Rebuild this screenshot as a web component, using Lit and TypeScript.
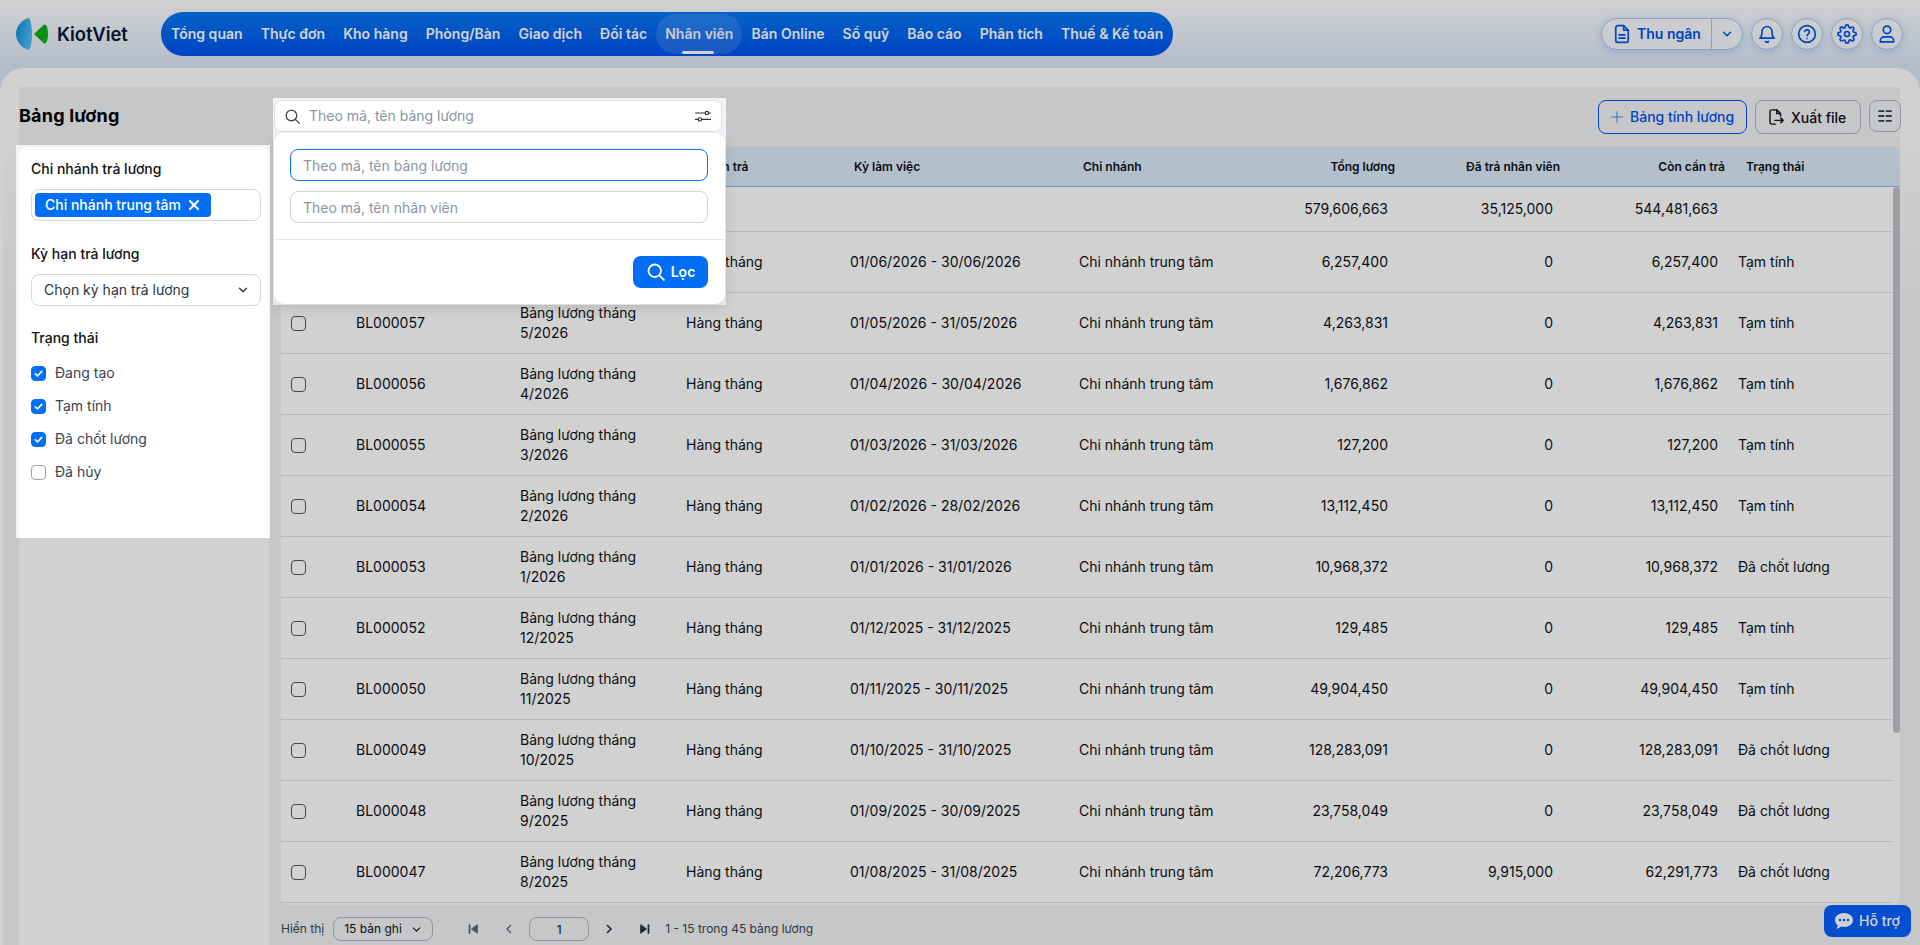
import { css, html, LitElement, svg, TemplateResult } from "lit";
import { customElement } from "lit/decorators.js";

const NAV = [
  "Tổng quan",
  "Thực đơn",
  "Kho hàng",
  "Phòng/Bàn",
  "Giao dịch",
  "Đối tác",
  "Nhân viên",
  "Bán Online",
  "Sổ quỹ",
  "Báo cáo",
  "Phân tích",
  "Thuế & Kế toán",
];

const ROWS = [
  ["BL000058", "6/2026", "01/06/2026 - 30/06/2026", "6,257,400", "0", "6,257,400", "Tạm tính"],
  ["BL000057", "5/2026", "01/05/2026 - 31/05/2026", "4,263,831", "0", "4,263,831", "Tạm tính"],
  ["BL000056", "4/2026", "01/04/2026 - 30/04/2026", "1,676,862", "0", "1,676,862", "Tạm tính"],
  ["BL000055", "3/2026", "01/03/2026 - 31/03/2026", "127,200", "0", "127,200", "Tạm tính"],
  ["BL000054", "2/2026", "01/02/2026 - 28/02/2026", "13,112,450", "0", "13,112,450", "Tạm tính"],
  ["BL000053", "1/2026", "01/01/2026 - 31/01/2026", "10,968,372", "0", "10,968,372", "Đã chốt lương"],
  ["BL000052", "12/2025", "01/12/2025 - 31/12/2025", "129,485", "0", "129,485", "Tạm tính"],
  ["BL000050", "11/2025", "01/11/2025 - 30/11/2025", "49,904,450", "0", "49,904,450", "Tạm tính"],
  ["BL000049", "10/2025", "01/10/2025 - 31/10/2025", "128,283,091", "0", "128,283,091", "Đã chốt lương"],
  ["BL000048", "9/2025", "01/09/2025 - 30/09/2025", "23,758,049", "0", "23,758,049", "Đã chốt lương"],
  ["BL000047", "8/2025", "01/08/2025 - 31/08/2025", "72,206,773", "9,915,000", "62,291,773", "Đã chốt lương"],
];

const STATUSES: [string, boolean][] = [
  ["Đang tạo", true],
  ["Tạm tính", true],
  ["Đã chốt lương", true],
  ["Đã hủy", false],
];

const icon = (size: number, body: unknown, width = 2): TemplateResult => html`<svg
  width=${size}
  height=${size}
  viewBox="0 0 24 24"
  fill="none"
  stroke="currentColor"
  stroke-width=${width}
  stroke-linecap="round"
  stroke-linejoin="round"
>
  ${body}
</svg>`;

const searchPath = svg`<circle cx="10.5" cy="10.5" r="7.5"></circle><path d="M16 16l5.5 5.5"></path>`;
const chevronDown = svg`<path d="M6 9l6 6 6-6"></path>`;
const bell = svg`<path d="M6 9a6 6 0 1 1 12 0c0 6 2.5 8 2.5 8h-17S6 15 6 9z"></path><path d="M10.3 21a2 2 0 0 0 3.4 0"></path>`;
const help = svg`<circle cx="12" cy="12" r="10"></circle><path d="M9.1 9a3 3 0 0 1 5.8 1c0 2-2.9 2.4-2.9 4.2"></path><path d="M12 17.6v.1"></path>`;
const gear = svg`<circle cx="12" cy="12" r="3"></circle><path d="M19.4 15a1.65 1.65 0 0 0 .33 1.82l.06.06a2 2 0 1 1-2.83 2.83l-.06-.06a1.65 1.65 0 0 0-1.82-.33 1.65 1.65 0 0 0-1 1.51V21a2 2 0 1 1-4 0v-.09A1.65 1.65 0 0 0 9 19.4a1.65 1.65 0 0 0-1.82.33l-.06.06a2 2 0 1 1-2.83-2.83l.06-.06a1.65 1.65 0 0 0 .33-1.82 1.65 1.65 0 0 0-1.51-1H3a2 2 0 1 1 0-4h.09A1.65 1.65 0 0 0 4.6 9a1.65 1.65 0 0 0-.33-1.82l-.06-.06a2 2 0 1 1 2.83-2.83l.06.06a1.65 1.65 0 0 0 1.82.33H9a1.65 1.65 0 0 0 1-1.51V3a2 2 0 1 1 4 0v.09a1.65 1.65 0 0 0 1 1.51 1.65 1.65 0 0 0 1.82-.33l.06-.06a2 2 0 1 1 2.83 2.83l-.06.06a1.65 1.65 0 0 0-.33 1.82V9a1.65 1.65 0 0 0 1.51 1H21a2 2 0 1 1 0 4h-.09a1.65 1.65 0 0 0-1.51 1z"></path>`;
const user = svg`<circle cx="12" cy="7" r="4.5"></circle><path d="M4 21.5v-1.5a4.5 4.5 0 0 1 4.500-4.500h7a4.500 4.500 0 0 1 4.500 4.500v1.500z"></path>`;
const fileDoc = svg`<path d="M14 2H7a2.500 2.500 0 0 0-2.500 2.500v15A2.500 2.500 0 0 0 7 22h10a2.500 2.500 0 0 0 2.500-2.500V7.500z"></path><path d="M14 2v5.500h5.500"></path><path d="M8.500 13h7M8.500 17h7"></path>`;
const exportDoc = svg`<path d="M11 21.500H6.500A2.500 2.500 0 0 1 4 19V5a2.500 2.500 0 0 1 2.500-2.500H13l5 5v3"></path><path d="M13 2.500v5h5"></path><path d="M10.500 16.500h11M18.500 13.500l3 3-3 3"></path>`;
const sliders = svg`<path d="M2 8h13M19.500 8H22M2 16.500h3.500M10 16.500h12"></path><circle cx="17.200" cy="8" r="2.200"></circle><circle cx="7.700" cy="16.500" r="2.200"></circle>`;
const columns = svg`<path stroke-linecap="butt" d="M3 5.500h8M13 5.500h8M3 12h8M13 12h8M3 18.500h8M13 18.500h8"></path>`;
const check = svg`<path d="M6 12.500l4 4 8-8.500"></path>`;

@customElement("app-root")
export class AppRoot extends LitElement {
  static styles = css`
    :host {
      display: block;
      width: 1920px;
      height: 945px;
      overflow: hidden;
      position: relative;
      font-family: Inter, "Noto Sans", sans-serif;
      font-size: 14px;
      line-height: 20px;
      color: #0d1117;
      background: linear-gradient(180deg, #fff 0, #dbe7f8 68px, #dbe7f8 100%);
    }
    * {
      box-sizing: border-box;
    }
    svg {
      display: block;
      flex: none;
    }

    /* top bar */
    .top {
      height: 68px;
      display: flex;
      align-items: center;
      padding: 0 17px 0 16px;
    }
    .logo {
      display: flex;
      align-items: center;
      gap: 9px;
      width: 145px;
      font-size: 18.5px;
      font-weight: 600;
      letter-spacing: -0.1px;
      color: #0b1736;
    }
    .nav {
      display: flex;
      align-items: center;
      height: 44px;
      padding: 0 1px;
      border-radius: 22px;
      background: linear-gradient(180deg, #0478f4 0, #0052ef 100%);
    }
    .nav-item {
      position: relative;
      height: 40px;
      display: flex;
      align-items: center;
      padding: 0 9px;
      border-radius: 20px;
      color: #fff;
      font-weight: 600;
      letter-spacing: 0.02px;
      white-space: nowrap;
    }
    .nav-item.active {
      background: rgba(255, 255, 255, 0.13);
      color: #f4f7fc;
    }
    .nav-item.active::after {
      content: "";
      position: absolute;
      left: 26px;
      bottom: 0;
      width: 32px;
      height: 3px;
      border-radius: 2px;
      background: #fff;
    }
    .right {
      margin-left: auto;
      display: flex;
      align-items: center;
      gap: 8px;
      color: #0052ef;
    }
    .pill,
    .round {
      height: 32px;
      border: 1px solid #a9c8f2;
      background: rgba(255, 255, 255, 0.55);
      box-shadow: 0 2px 8px rgba(40, 110, 220, 0.22);
    }
    .pill {
      width: 142px;
      display: flex;
      align-items: center;
      border-radius: 16px;
      font-weight: 600;
    }
    .pill-main {
      display: flex;
      align-items: center;
      gap: 5px;
      width: 110px;
      height: 100%;
      padding-left: 10px;
      border-right: 1px solid #a9c8f2;
    }
    .pill-caret {
      flex: 1;
      display: flex;
      justify-content: center;
    }
    .round {
      width: 32px;
      border-radius: 50%;
      display: flex;
      align-items: center;
      justify-content: center;
    }

    /* page card */
    .card {
      height: 877px;
      padding: 19px 20px 0 16px;
      border-left: 3px solid #fff;
      border-radius: 24px 24px 0 0;
      background: linear-gradient(180deg, #fff 0, #fff 60px, #f2f3f6 260px);
      overflow: hidden;
    }
    .inner {
      height: 858px;
      background: #f2f3f5;
    }
    .toolbar {
      height: 60px;
      padding-top: 13px;
      display: flex;
      align-items: flex-start;
    }
    .title {
      width: 255px;
      font-size: 18px;
      font-weight: 700;
      letter-spacing: 0.2px;
      line-height: 32px;
      color: #000;
    }

    /* highlighted search */
    .search-wrap {
      position: relative;
      z-index: 20;
      width: 448px;
      height: 32px;
    }
    .spot {
      position: absolute;
      top: -2px;
      left: -1px;
      width: 453px;
      height: 207px;
      background: #f2f3f6;
    }
    .search {
      position: relative;
      height: 32px;
      display: flex;
      align-items: center;
      padding: 0 9px 0 9px;
      border: 1px solid #e0e2e7;
      border-radius: 8px;
      background: #fff;
      color: #8a94a6;
    }
    .search .q {
      margin-left: 8px;
      flex: 1;
    }
    .search .mag {
      color: #3d4656;
    }
    .search .sl {
      color: #2b3442;
    }
    .popup {
      position: absolute;
      top: 33px;
      left: 0;
      width: 451px;
      height: 171px;
      padding: 16px 16px 0;
      border-radius: 10px;
      background: #fff;
      box-shadow: 0 4px 14px rgba(0, 0, 0, 0.12);
    }
    .popup input {
      display: block;
      width: 418px;
      height: 32px;
      margin-bottom: 10px;
      padding: 0 12px;
      border: 1px solid #cfd3da;
      border-radius: 8px;
      outline: none;
      font: inherit;
      background: #fff;
    }
    .popup input::placeholder {
      color: #8a94a6;
      opacity: 1;
    }
    .popup input.focus {
      border-color: #0a6ff5;
    }
    .popup hr {
      margin: 16px -16px 16px;
      border: 0;
      border-top: 1px solid #e8e9ed;
    }
    .apply {
      margin: 0 1px 0 auto;
      width: 75px;
      height: 32px;
      display: flex;
      align-items: center;
      justify-content: center;
      gap: 5px;
      border-radius: 8px;
      background: #006ff5;
      color: #fff;
      font-weight: 600;
    }

    .actions {
      margin: 0 -1px 0 auto;
      display: flex;
      gap: 8px;
    }
    .btn {
      height: 34px;
      display: flex;
      align-items: center;
      border: 1px solid #b4b8bf;
      border-radius: 8px;
      font-weight: 500;
    }
    .btn.primary {
      width: 149px;
      padding-left: 11px;
      gap: 6px;
      color: #0052ef;
      border-color: #0052ef;
    }
    .btn.primary .plus {
      color: #2f80f5;
    }
    .btn.export {
      width: 106px;
      padding-left: 11px;
      gap: 6px;
    }
    .btn.export span {
      padding-top: 2px;
    }
    .btn.cols {
      width: 32px;
      height: 32px;
      justify-content: center;
      color: #3d4656;
    }

    /* body */
    .content {
      display: flex;
      gap: 12px;
      height: 798px;
    }
    .aside {
      width: 250px;
      background: #fff;
      border-radius: 8px 8px 0 0;
    }
    .filter {
      position: relative;
      z-index: 20;
      width: 254px;
      height: 393px;
      margin: -2px 0 0 -3px;
      padding: 2px 1px 0 3px;
      background: #f2f3f6;
    }
    .filter-card {
      height: 100%;
      padding: 12px 8px 0 12px;
      border-radius: 8px 8px 0 0;
      background: #fff;
    }
    .label {
      font-weight: 500;
      color: #111;
    }
    .tags {
      margin: 10px 0 23px;
      height: 32px;
      padding: 3px;
      border: 1px solid #d3d6dc;
      border-radius: 8px;
    }
    .tag {
      width: 176px;
      height: 24px;
      display: flex;
      align-items: center;
      gap: 7px;
      padding-left: 10px;
      border-radius: 4px;
      background: #006ff5;
      color: #fff;
      font-weight: 500;
    }
    .select {
      margin: 10px 0 22px;
      height: 32px;
      display: flex;
      align-items: center;
      justify-content: space-between;
      padding: 0 10px 0 12px;
      border: 1px solid #d3d6dc;
      border-radius: 8px;
      color: #2b3442;
    }
    .statuses {
      margin-top: 15px;
      display: flex;
      flex-direction: column;
      gap: 13px;
    }
    .status {
      display: flex;
      align-items: center;
      gap: 9px;
      color: #3a4350;
    }
    .box {
      width: 15px;
      height: 15px;
      border: 1.5px solid #9aa1ad;
      border-radius: 4px;
      background: #fff;
      display: flex;
      align-items: center;
      justify-content: center;
      color: #fff;
    }
    .box.on {
      border-color: #006ff5;
      background: #006ff5;
    }
    .box.tick {
      border-color: #4f5766;
      background: transparent;
    }

    /* table */
    .main {
      width: 1619px;
      display: flex;
      flex-direction: column;
    }
    .table {
      position: relative;
      flex: 1;
      min-height: 0;
      overflow: hidden;
      border-radius: 8px;
      background: #fff;
    }
    .grid {
      display: grid;
      grid-template-columns: 65px 164px 166px 164px 229px 164px 165px 165px 165px 1fr;
      align-items: center;
    }
    .head {
      height: 40px;
      background: #dce9f9;
      border-bottom: 1px solid #8db7ee;
      font-size: 12px;
      font-weight: 600;
      color: #0d1117;
    }
    .head > div {
      padding: 0 3px 0 14px;
    }
    .head > .last {
      padding-left: 18px;
    }
    .head > .num,
    .cell.num {
      text-align: right;
    }
    .rows {
      width: 1612px;
    }
    .cell {
      padding: 0 10px;
    }
    .row {
      height: 61px;
      border-bottom: 1px solid #e1e3e9;
    }
    .row.sum {
      height: 45px;
    }
    .thumb {
      position: absolute;
      top: 40px;
      right: 0;
      width: 7px;
      height: 546px;
      border-radius: 4px;
      background: #c1c3c9;
    }

    /* pagination */
    .pager {
      height: 40px;
      padding-top: 12px;
      display: flex;
      align-items: flex-start;
      font-size: 12px;
      line-height: 24px;
      color: #3a4350;
    }
    .pg-select {
      margin-left: 9px;
      width: 100px;
      height: 24px;
      display: flex;
      align-items: center;
      justify-content: space-between;
      padding: 0 9px 0 10px;
      border: 1px solid #b4b8bf;
      border-radius: 8px;
      color: #0d1117;
    }
    .pg-btn {
      height: 24px;
      display: flex;
      align-items: center;
      color: #2b3442;
    }
    .pg-btn.off {
      color: #5f6775;
    }
    .pg-input {
      width: 60px;
      height: 24px;
      border: 1px solid #b4b8bf;
      border-radius: 8px;
      text-align: center;
      color: #0d1117;
    }
    .support {
      position: absolute;
      right: 9px;
      bottom: 8px;
      width: 87px;
      height: 32px;
      display: flex;
      align-items: center;
      justify-content: center;
      gap: 6px;
      border-radius: 8px;
      background: #0660fd;
      color: #fff;
      font-weight: 500;
    }
    .overlay {
      position: absolute;
      inset: 0;
      z-index: 10;
      background: rgba(0, 0, 0, 0.18);
    }
  `;

  private renderTop(): TemplateResult {
    return html`
      <header class="top">
        <div class="logo">
          <svg width="32" height="32" viewBox="0 0 32 32">
            <defs>
              <linearGradient id="lg" x1="0" y1="0" x2="1" y2="0.4">
                <stop offset="0" stop-color="#0a8de0"></stop>
                <stop offset="1" stop-color="#52bdf8"></stop>
              </linearGradient>
            </defs>
            <path
              d="M13 0C5 2 0 9 0 16s5 14 13 16c4-5 4-27 0-32z"
              fill="url(#lg)"
            ></path>
            <path
              d="M18 16L28 6.500c3-1 4 5.500 4 9.500s-1 10.500-4 9.500z"
              fill="#0cb01a"
            ></path>
          </svg>
          <span>KiotViet</span>
        </div>
        <nav class="nav">
          ${NAV.map(
            (n) =>
              html`<div class="nav-item ${n === "Nhân viên" ? "active" : ""}">
                ${n}
              </div>`
          )}
        </nav>
        <div class="right">
          <div class="pill">
            <div class="pill-main">${icon(20, fileDoc)}<span>Thu ngân</span></div>
            <div class="pill-caret">${icon(14, chevronDown, 2.5)}</div>
          </div>
          <div class="round">${icon(20, bell)}</div>
          <div class="round">${icon(20, help)}</div>
          <div class="round">${icon(20, gear)}</div>
          <div class="round">${icon(20, user)}</div>
        </div>
      </header>
    `;
  }

  private renderSearch(): TemplateResult {
    return html`
      <div class="search-wrap">
        <div class="spot"></div>
        <div class="search">
          <span class="mag">${icon(17, searchPath, 1.8)}</span>
          <span class="q">Theo mã, tên bảng lương</span>
          <span class="sl">${icon(18, sliders, 1.5)}</span>
        </div>
        <div class="popup">
          <input class="focus" placeholder="Theo mã, tên bảng lương" />
          <input placeholder="Theo mã, tên nhân viên" />
          <hr />
          <div class="apply">${icon(20, searchPath, 2.2)}<span>Lọc</span></div>
        </div>
      </div>
    `;
  }

  private renderFilter(): TemplateResult {
    return html`
      <aside class="aside">
        <div class="filter">
          <div class="filter-card">
            <div class="label">Chi nhánh trả lương</div>
            <div class="tags">
              <div class="tag">
                <span>Chi nhánh trung tâm</span>
                ${icon(12, svg`<path d="M4 4l16 16M20 4L4 20"></path>`, 4.4)}
              </div>
            </div>
            <div class="label">Kỳ hạn trả lương</div>
            <div class="select">
              <span>Chọn kỳ hạn trả lương</span>${icon(14, chevronDown, 2.4)}
            </div>
            <div class="label">Trạng thái</div>
            <div class="statuses">
              ${STATUSES.map(
                ([name, on]) => html`<div class="status">
                  <div class="box ${on ? "on" : ""}">
                    ${on ? icon(13, check, 3) : ""}
                  </div>
                  <span>${name}</span>
                </div>`
              )}
            </div>
          </div>
        </div>
      </aside>
    `;
  }

  private renderTable(): TemplateResult {
    return html`
      <div class="table">
        <div class="grid head">
          <div></div>
          <div>Mã bảng lương</div>
          <div>Tên</div>
          <div>Kỳ hạn trả</div>
          <div>Kỳ làm việc</div>
          <div>Chi nhánh</div>
          <div class="num">Tổng lương</div>
          <div class="num">Đã trả nhân viên</div>
          <div class="num">Còn cần trả</div>
          <div class="last">Trạng thái</div>
        </div>
        <div class="rows">
          <div class="grid row sum">
            <div></div>
            <div></div>
            <div></div>
            <div></div>
            <div></div>
            <div></div>
            <div class="cell num">579,606,663</div>
            <div class="cell num">35,125,000</div>
            <div class="cell num">544,481,663</div>
            <div></div>
          </div>
          ${ROWS.map(
            (r) => html`<div class="grid row">
              <div class="cell"><div class="box tick"></div></div>
              <div class="cell">${r[0]}</div>
              <div class="cell">Bảng lương tháng ${r[1]}</div>
              <div class="cell">Hàng tháng</div>
              <div class="cell">${r[2]}</div>
              <div class="cell">Chi nhánh trung tâm</div>
              <div class="cell num">${r[3]}</div>
              <div class="cell num">${r[4]}</div>
              <div class="cell num">${r[5]}</div>
              <div class="cell">${r[6]}</div>
            </div>`
          )}
        </div>
        <div class="thumb"></div>
      </div>
    `;
  }

  private renderPager(): TemplateResult {
    return html`
      <div class="pager">
        <span>Hiển thị</span>
        <div class="pg-select">
          <span>15 bản ghi</span>${icon(13, chevronDown, 2)}
        </div>
        <div class="pg-btn off" style="margin-left:34px">
          ${icon(
            12,
            svg`<path d="M5 4v16" stroke-width="3.500"></path><path d="M20 4L9 12l11 8z" fill="currentColor"></path>`
          )}
        </div>
        <div class="pg-btn off" style="margin-left:24px">
          ${icon(12, svg`<path d="M15 5l-7 7 7 7"></path>`, 2.6)}
        </div>
        <div class="pg-input" style="margin-left:14px">1</div>
        <div class="pg-btn" style="margin-left:14px">
          ${icon(12, svg`<path d="M9 5l7 7-7 7"></path>`, 3.4)}
        </div>
        <div class="pg-btn" style="margin-left:24px">
          ${icon(
            12,
            svg`<path d="M19 4v16" stroke-width="3.500"></path><path d="M4 4l11 8-11 8z" fill="currentColor"></path>`
          )}
        </div>
        <span style="margin-left:14px">1 - 15 trong 45 bảng lương</span>
      </div>
    `;
  }

  render(): TemplateResult {
    return html`
      ${this.renderTop()}
      <section class="card">
        <div class="inner">
          <div class="toolbar">
            <div class="title">Bảng lương</div>
            ${this.renderSearch()}
            <div class="actions">
              <div class="btn primary">
                <span class="plus">${icon(14, svg`<path d="M12 3v18M3 12h18"></path>`, 1.6)}</span>
                <span>Bảng tính lương</span>
              </div>
              <div class="btn export">
                ${icon(18, exportDoc, 1.9)}<span>Xuất file</span>
              </div>
              <div class="btn cols">${icon(18, columns, 2.400)}</div>
            </div>
          </div>
          <div class="content">
            ${this.renderFilter()}
            <div class="main">${this.renderTable()}${this.renderPager()}</div>
          </div>
        </div>
      </section>
      <div class="support">
        <svg width="18" height="16" viewBox="0 0 18 16">
          <path
            d="M9 0c5 0 9 3 9 7s-4 7-9 7c-1 0-2-.1-3-.4C5 14.600 3 15.800 1 16c1-1 1.700-2.500 1.800-3.800C1 11 0 9.100 0 7c0-4 4-7 9-7z"
            fill="#fff"
          ></path>
          <circle cx="5" cy="7" r="1.300" fill="#0660fd"></circle>
          <circle cx="9" cy="7" r="1.300" fill="#0660fd"></circle>
          <circle cx="13" cy="7" r="1.300" fill="#0660fd"></circle>
        </svg>
        <span>Hỗ trợ</span>
      </div>
      <div class="overlay"></div>
    `;
  }
}
